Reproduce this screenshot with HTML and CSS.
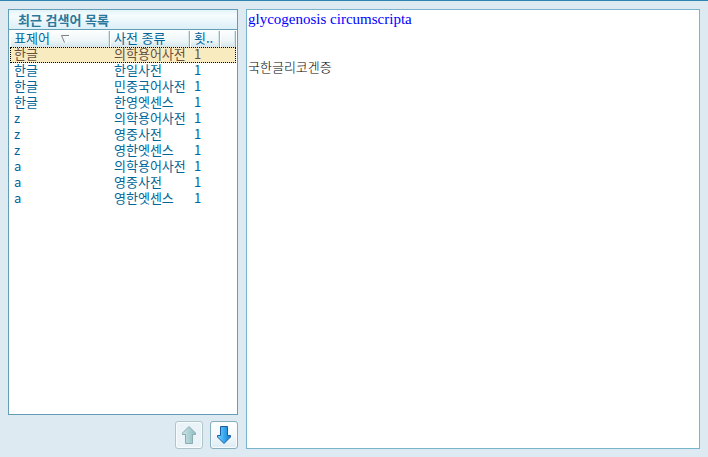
FILE: index.html
```
<!DOCTYPE html>
<html lang="ko">
<head>
<meta charset="utf-8">
<title>최근 검색어 목록</title>
<link rel="stylesheet" href="styles.css">
</head>
<body>
<main class="app">
  <aside class="sidebar">
    <section class="panel history">
      <h1 class="panel-title">최근 검색어 목록</h1>
      <div class="list">
        <table class="words">
          <colgroup><col class="col-word"><col class="col-dict"><col class="col-count"><col></colgroup>
          <thead>
            <tr>
              <th scope="col">표제어<svg class="sort" viewBox="0 0 9 8" aria-hidden="true"><path d="M7.500 1L5 7.500" stroke="#fff"/><path d="M8 .5H.5L3.500 7.500" stroke="#808080"/></svg></th>
              <th scope="col">사전 종류</th>
              <th scope="col">횟..</th>
              <td></td>
            </tr>
          </thead>
          <tbody>
            <tr class="selected"><td>한글</td><td>의학용어사전</td><td>1</td><td></td></tr>
            <tr><td>한글</td><td>한일사전</td><td>1</td><td></td></tr>
            <tr><td>한글</td><td>민중국어사전</td><td>1</td><td></td></tr>
            <tr><td>한글</td><td>한영엣센스</td><td>1</td><td></td></tr>
            <tr><td>z</td><td>의학용어사전</td><td>1</td><td></td></tr>
            <tr><td>z</td><td>영중사전</td><td>1</td><td></td></tr>
            <tr><td>z</td><td>영한엣센스</td><td>1</td><td></td></tr>
            <tr><td>a</td><td>의학용어사전</td><td>1</td><td></td></tr>
            <tr><td>a</td><td>영중사전</td><td>1</td><td></td></tr>
            <tr><td>a</td><td>영한엣센스</td><td>1</td><td></td></tr>
          </tbody>
        </table>
      </div>
    </section>
    <div class="actions">
      <button class="move" type="button" aria-label="위로" disabled>
        <svg viewBox="0 0 14 18" aria-hidden="true">
          <defs><linearGradient id="up" x2="1"><stop offset="0" stop-color="#c9e3e6"/><stop offset="1" stop-color="#8fbcc4"/></linearGradient></defs>
          <path d="M7 .5L13.500 7V8.500H10.500V17.500H3.500V8.500H.5V7Z" fill="url(#up)" stroke="#8cabb0"/>
        </svg>
      </button>
      <button class="move" type="button" aria-label="아래로">
        <svg viewBox="0 0 14 18" aria-hidden="true">
          <defs><linearGradient id="down" x2="1"><stop offset="0" stop-color="#7fd4fa"/><stop offset=".5" stop-color="#38aaf0"/><stop offset="1" stop-color="#1678cc"/></linearGradient></defs>
          <path d="M7 17.500L13.500 11V9.500H10.500V.5H3.500V9.500H.5V11Z" fill="url(#down)" stroke="#1b5ea6"/>
        </svg>
      </button>
    </div>
  </aside>
  <article class="panel entry">
    <h2 class="headword">glycogenosis circumscripta</h2>
    <p class="meaning">국한글리코겐증</p>
  </article>
</main>
</body>
</html>
```
FILE: styles.css
```
* { box-sizing: border-box; }

body {
  margin: 0;
  background: #deeaf2;
  color: #006699;
  font: 13px/16px "Noto Sans CJK KR", sans-serif;
}

.app {
  display: grid;
  grid-template-columns: 230px 1fr;
  gap: 8px;
  min-height: 100vh;
  padding: 8px;
  border-top: 1px solid #2e86b0;
}

.sidebar {
  display: flex;
  flex-direction: column;
  gap: 6px;
}

.panel {
  background: #fff;
  border: 1px solid #78b4cb;
}

.history {
  flex: 1;
  border-color: #629fb6;
}

.panel-title {
  height: 20px;
  margin: 0;
  padding: 0 9px;
  border-bottom: 1px solid #629fb6;
  background: linear-gradient(#e4f4f9, #f5fcfe 30%, #dceff8);
  color: #2b789b;
  font-size: 13px;
  font-weight: 700;
  line-height: 20px;
}

.list { padding: 1px; }

.words {
  width: 100%;
  table-layout: fixed;
  border-collapse: separate;
  border-spacing: 0;
}

.col-word { width: 100px; }
.col-dict { width: 80px; }
.col-count { width: 30px; }

.words th,
.words td {
  height: 16px;
  padding: 0 0 0 4px;
  font-weight: 400;
  line-height: 14px;
  text-align: left;
  vertical-align: top;
  white-space: nowrap;
}

.words thead th,
.words thead td {
  border-right: 1px solid #8db7c0;
  background: linear-gradient(#fdfefe, #eef6f8 60%, #d3e6eb);
  box-shadow: inset -1px 0 #d5e6ea, inset 1px 0 #fff;
}

.sort {
  width: 9px;
  height: 8px;
  margin-left: 11px;
  fill: none;
}

.selected {
  background: #f8ebc0;
  color: #69503f;
  outline: 1px dotted #000;
  outline-offset: -1px;
}

.actions {
  display: flex;
  justify-content: flex-end;
  gap: 7px;
}

.move {
  display: grid;
  place-items: center;
  width: 28px;
  height: 28px;
  padding: 0;
  border: 1px solid #86b0bd;
  border-radius: 3px;
  background: linear-gradient(#fff, #f5f9fc 50%, #dcebf4);
  box-shadow: inset 0 0 0 1px #f8fcfe;
}

.move:disabled {
  border-color: #b0c5c9;
  background: #eaf3f7;
}

.move svg {
  width: 14px;
  height: 18px;
}

.entry {
  padding: 1px;
  color: #000;
}

.headword {
  margin: 0 0 32px;
  color: #0000ff;
  font: 400 15px/16px "Liberation Serif", serif;
}

.meaning {
  margin: 0;
  font-weight: 300;
}
```
